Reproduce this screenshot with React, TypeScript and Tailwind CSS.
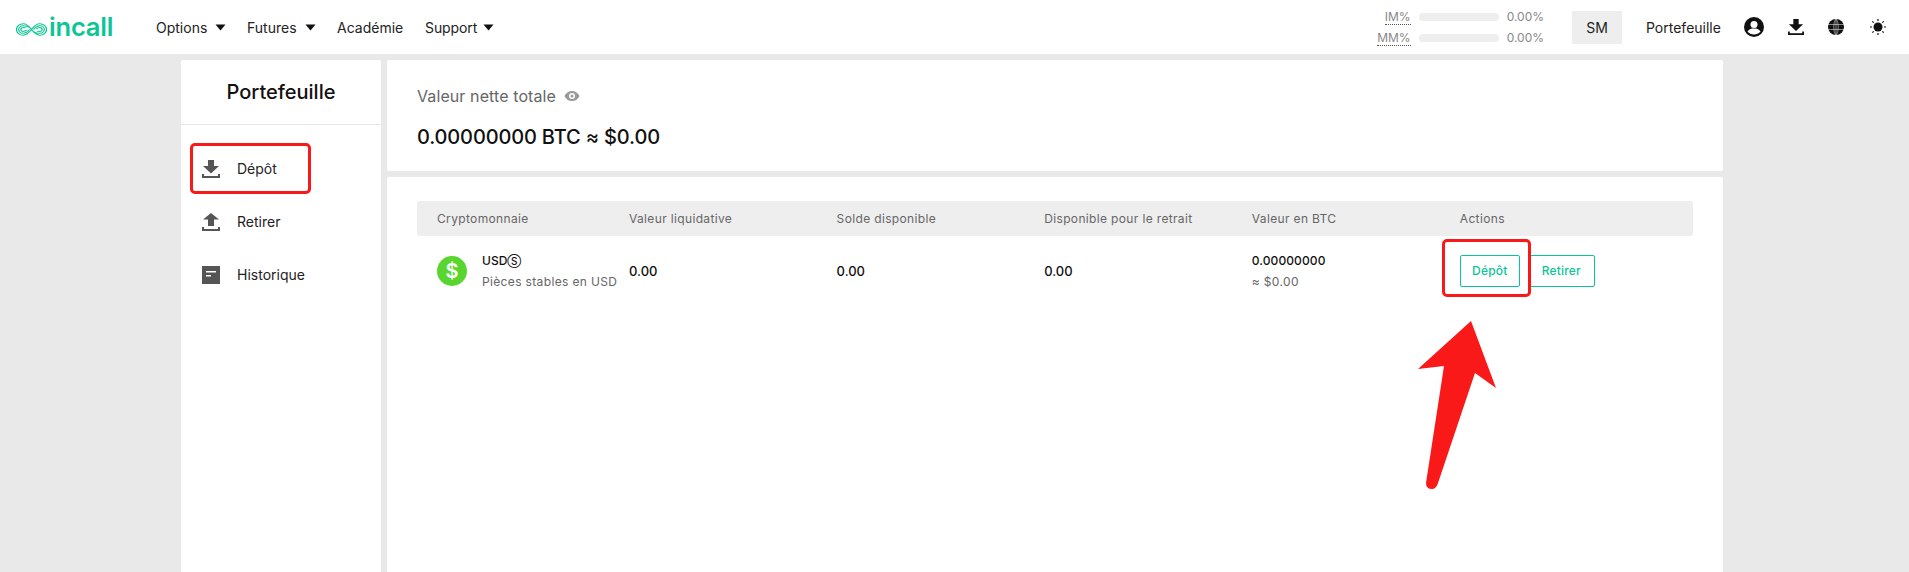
const columns = [
  "Cryptomonnaie",
  "Valeur liquidative",
  "Solde disponible",
  "Disponible pour le retrait",
  "Valeur en BTC",
  "Actions",
];

function Caret({ className }: { className: string }) {
  return (
    <svg width="11" height="7" viewBox="0 0 11 7" className={className}>
      <path d="M0.5 0.5h10L5.500 6.500z" fill="#111" />
    </svg>
  );
}

function NavItem({ label, caret, className }: { label: string; caret?: string; className: string }) {
  return (
    <div className={`flex items-center text-[14px] text-[#222] ${className}`}>
      {label}
      {caret && <Caret className={caret} />}
    </div>
  );
}

function Logo() {
  return (
    <div className="flex items-center w-[96px] text-[#0cc596]">
      <svg width="31" height="13" viewBox="0 0 32 16" preserveAspectRatio="none" fill="none" stroke="#0cc596" strokeWidth="1.300" className="shrink-0 mt-[5px]">
        <path d="M16 8C13 3.500 10.500 1 7.500 1a7 7 0 0 0 0 14c3 0 5.500-2.500 8.500-7s5.500-7 8.500-7a7 7 0 0 1 0 14c-3 0-5.500-2.500-8.500-7z" />
        <path d="M14 5.500C12.500 4 10 3.300 7.500 3.300a4.700 4.700 0 0 0 0 9.400c3 0 5-2.500 6.500-4.700" />
        <path d="M18 10.500c1.500 1.500 4 2.200 6.500 2.200a4.700 4.700 0 0 0 0-9.400c-3 0-5 2.500-6.500 4.700" />
        <path d="M10.500 6C9.500 5.500 8.500 5.500 7.500 5.500a2.500 2.500 0 0 0 0 5c1.500 0 2.500-1 3.500-2" />
        <path d="M21.500 10c1 .5 2 .5 3 .5a2.500 2.500 0 0 0 0-5c-1.500 0-2.500 1-3.500 2" />
      </svg>
      <span className="ml-[2px] text-[25.500px] leading-none font-semibold tracking-[-0.2px]">incall</span>
    </div>
  );
}

function MarginRow({ label }: { label: string }) {
  return (
    <div className="flex items-center h-[21px]">
      <div className="w-[50px] flex justify-end">
        <span className="text-[12px] leading-[15px] text-[#888] border-b border-dotted border-[#555]">{label}</span>
      </div>
      <div className="ml-[8px] w-[80px] h-[8px] rounded-full bg-[#eeeeee]" />
      <span className="ml-[8px] text-[12px] text-[#888]">0.00%</span>
    </div>
  );
}

function DownloadIcon({ color, size }: { color: string; size: number }) {
  return (
    <svg width={size} height={size} viewBox="0 0 18 18" fill={color}>
      <path d="M6 0h6v6h5L9 13.500 1 6h5z" />
      <path d="M0 14h2v2h14v-2h2v4H0z" />
    </svg>
  );
}

function UploadIcon() {
  return (
    <svg width="18" height="18" viewBox="0 0 18 18" fill="#555">
      <path d="M9 0l8 6.500h-5V13H6V6.500H1z" />
      <path d="M0 14h2v2h14v-2h2v4H0z" />
    </svg>
  );
}

function HistoryIcon() {
  return (
    <svg width="18" height="18" viewBox="0 0 18 18">
      <rect width="18" height="18" fill="#555" />
      <rect x="4" y="5" width="10" height="1.500" fill="#fff" />
      <rect x="4" y="9" width="5" height="1.500" fill="#fff" />
    </svg>
  );
}

function SideItem({ icon, label }: { icon: React.ReactNode; label: string }) {
  return (
    <div className="flex items-center h-[53px] pl-[21px]">
      {icon}
      <span className="ml-[17px] text-[14px] text-[#222]">{label}</span>
    </div>
  );
}

function ActionButton({ label, className }: { label: string; className: string }) {
  return (
    <button className={`h-[32px] border border-[#0cc596] rounded-[2px] text-[12px] font-medium text-[#0cc596] tracking-[0.2px] ${className}`}>
      {label}
    </button>
  );
}

export default function App() {
  return (
    <div className="relative h-[572px] w-[1909px] overflow-hidden bg-[#e9e9e9] font-['Inter',sans-serif]">
      <header className="flex items-center h-[54px] bg-white pl-[16px]">
        <Logo />
        <NavItem label="Options" caret="ml-[8px]" className="ml-[44px] w-[91px]" />
        <NavItem label="Futures" caret="ml-[8px]" className="w-[90px]" />
        <NavItem label="Académie" className="w-[88px]" />
        <NavItem label="Support" caret="ml-[6px]" className="tracking-[-0.1px]" />
        <div className="ml-auto flex items-center">
          <div className="flex flex-col">
            <MarginRow label="IM%" />
            <MarginRow label="MM%" />
          </div>
          <div className="ml-[28px] w-[50px] h-[33px] bg-[#eeeeee] flex items-center justify-center text-[14px] text-[#222]">SM</div>
          <span className="ml-[24px] w-[74px] whitespace-nowrap text-[14px] text-[#222]">Portefeuille</span>
          <svg className="ml-[24px]" width="20" height="20" viewBox="0 0 20 20">
            <circle cx="10" cy="10" r="10" fill="#111" />
            <circle cx="10" cy="7.500" r="3.500" fill="#fff" />
            <path d="M3.500 14.500c1.500-2.500 4-3 6.500-3s5 .5 6.500 3c-1.500 2-4 3-6.500 3s-5-1-6.500-3z" fill="#fff" />
          </svg>
          <div className="ml-[24px] flex">
            <DownloadIcon color="#111" size={16} />
          </div>
          <svg className="ml-[24px]" width="16" height="16" viewBox="0 0 16 16" fill="#111">
            <circle cx="8" cy="8" r="8" />
            <path d="M0 5.500h16M0 10.500h16M8 0v16M8 0C5 3 5 13 8 16M8 0c3 3 3 13 0 16" stroke="#fff" strokeWidth="0.500" fill="none" />
          </svg>
          <svg className="ml-[26px] mr-[23px]" width="16" height="16" viewBox="0 0 16 16" fill="#111">
            <circle cx="8" cy="8" r="4.500" />
            <path d="M8 0v2M8 14v2M0 8h2M14 8h2M2.300 2.300l1.400 1.400M12.300 12.300l1.400 1.400M2.300 13.700l1.400-1.400M12.300 3.700l1.400-1.400" stroke="#111" strokeWidth="1.200" />
          </svg>
        </div>
      </header>

      <div className="flex gap-[6px] pt-[6px] pl-[181px] w-[1723px]">
        <aside className="w-[200px] h-[520px] bg-white rounded-[2px] shrink-0">
          <div className="h-[65px] border-b border-[#e8e8e8] flex items-center justify-center text-[20px] font-medium text-[#111]">
            Portefeuille
          </div>
          <div className="pt-[17px]">
            <SideItem icon={<DownloadIcon color="#555" size={18} />} label="Dépôt" />
            <SideItem icon={<UploadIcon />} label="Retirer" />
            <SideItem icon={<HistoryIcon />} label="Historique" />
          </div>
        </aside>

        <main className="flex-1 flex flex-col gap-[6px]">
          <section className="h-[111px] bg-white rounded-[2px] px-[30px] pt-[25px]">
            <div className="flex items-center text-[16px] leading-[22px] text-[#666] tracking-[0.1px]">
              Valeur nette totale
              <svg className="ml-[8px]" width="16" height="12" viewBox="0 0 16 12" fill="#999">
                <path fillRule="evenodd" d="M8 1c3.500 0 6.200 2 7.500 5-1.300 3-4 5-7.500 5S1.800 9 .5 6C1.800 3 4.500 1 8 1zm0 2a3 3 0 1 0 0 6 3 3 0 0 0 0-6zm0 1.500a1.500 1.500 0 1 1 0 3 1.500 1.500 0 0 1 0-3z" />
              </svg>
            </div>
            <div className="mt-[16px] text-[20px] leading-[28px] font-medium text-[#111] tracking-[-0.15px]">0.00000000 BTC ≈ $0.00</div>
          </section>

          <section className="flex-1 h-[400px] bg-white rounded-[2px] px-[30px] pt-[24px]">
            <div className="grid grid-cols-[192px_207.600px_207.600px_207.600px_208px_1fr] h-[35px] items-center bg-[#eeeeee] rounded-[2px] pl-[20px] text-[12px] tracking-[0.35px] text-[#666]">
              {columns.map((c) => (
                <span key={c}>{c}</span>
              ))}
            </div>
            <div className="grid grid-cols-[192px_207.600px_207.600px_207.600px_208px_1fr] items-center h-[70px] pl-[20px] text-[12px] text-[#111]">
              <div className="flex items-center">
                <div className="w-[30px] h-[30px] rounded-full bg-[#58d62f] flex items-center justify-center text-white text-[20px] font-semibold">$</div>
                <div className="ml-[15px]">
                  <div className="font-medium leading-[20px] h-[20px]">
                    USD<span className="text-[10px]">Ⓢ</span>
                  </div>
                  <div className="mt-[1px] leading-[20px] text-[#666] whitespace-nowrap tracking-[0.35px]">Pièces stables en USD</div>
                </div>
              </div>
              <span className="font-medium text-[13px] pt-[2px]">0.00</span>
              <span className="font-medium text-[13px] pt-[2px]">0.00</span>
              <span className="font-medium text-[13px] pt-[2px]">0.00</span>
              <div>
                <div className="font-medium leading-[20px] tracking-[0.1px]">0.00000000</div>
                <div className="mt-[1px] leading-[20px] text-[#666] tracking-[0.35px]">≈ $0.00</div>
              </div>
              <div className="flex gap-[8px]">
                <ActionButton label="Dépôt" className="w-[60px]" />
                <ActionButton label="Retirer" className="w-[67px]" />
              </div>
            </div>
          </section>
        </main>
      </div>

      {/* annotations on top of the screenshot */}
      <div className="absolute left-[190px] top-[143px] w-[121px] h-[51px] border-[3px] border-[#fa1919] rounded-[5px]" />
      <div className="absolute left-[1442px] top-[239px] w-[89px] h-[58px] border-[3px] border-[#fa1919] rounded-[5px]" />
      <svg className="absolute left-0 top-0" width="1909" height="572">
        <path
          d="M1471 321L1418 369L1444 366L1426 483Q1426 489 1432 489Q1436 489 1438 483L1475 373L1496 388Z"
          fill="#fa1919"
        />
      </svg>
    </div>
  );
}
